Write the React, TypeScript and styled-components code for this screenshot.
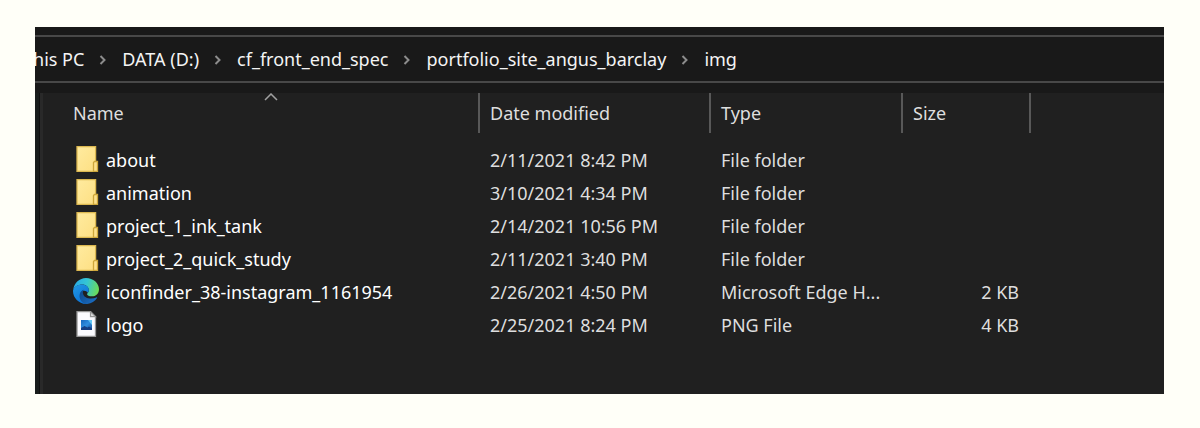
import React from "react";
import styled, { createGlobalStyle } from "styled-components";

const GlobalStyle = createGlobalStyle`
  *, *::before, *::after { box-sizing: border-box; }
  body {
    margin: 0;
    background: #fffff8;
    font-family: "Noto Sans", "Open Sans", sans-serif;
    font-size: 18px;
    line-height: 24px;
  }
`;

const Page = styled.main`
  padding: 27px 36px 34px 35px;
`;

const Explorer = styled.section`
  background: #191919;
  overflow: hidden;
`;

const AddressBar = styled.nav`
  margin-top: 8px;
  border-top: 2px solid #484848;
  border-bottom: 2px solid #484848;
  overflow: hidden;
`;

const Crumbs = styled.ol`
  display: flex;
  align-items: center;
  height: 44px;
  margin: 0 0 0 -12px;
  padding: 0;
  list-style: none;
`;

const Crumb = styled.li`
  display: flex;
  align-items: center;
  white-space: nowrap;
`;

const CrumbLink = styled.a`
  color: #f4f4f4;
  text-decoration: none;
`;

const ChevronIcon = styled.svg`
  flex: none;
  width: 8px;
  height: 12px;
  margin: 2px 15px 0;
`;

const Body = styled.div`
  display: flex;
  margin-top: 10px;
`;

const PaneEdge = styled.div`
  flex: none;
  width: 8px;
  border-right: 3px solid #292929;
  background: linear-gradient(to right, #191d1c 4px, #111111 4px);
`;

const ListPane = styled.div`
  flex: 1;
  min-width: 0;
  padding-bottom: 53px;
  background: #202020;
`;

const FileTable = styled.table`
  width: 100%;
  table-layout: fixed;
  border-collapse: separate;
  border-spacing: 0;
`;

const Column = styled.col<{ $width?: number }>`
  width: ${({ $width }) => ($width ? `${$width}px` : "auto")};
`;

const HeadCell = styled.th`
  position: relative;
  height: 40px;
  padding: 0;
  border-right: 2px solid #585858;
  &:last-child { border-right: 0; }
`;

const SortButton = styled.button<{ $indent: number }>`
  display: block;
  width: 100%;
  height: 40px;
  padding: 0 0 0 ${({ $indent }) => $indent}px;
  border: 0;
  background: none;
  color: #dedede;
  font: inherit;
  font-weight: 400;
  text-align: left;
`;

const SortMark = styled.svg`
  position: absolute;
  top: 0;
  left: 50%;
  width: 14px;
  height: 8px;
  margin-left: 3px;
`;

const Rows = styled.tbody`
  &::before {
    content: "";
    display: table-row;
    height: 10px;
  }
`;

const Cell = styled.td<{ $align?: "left" | "right" }>`
  height: 33px;
  padding: 0 12px 0 10px;
  color: #dedede;
  text-align: ${({ $align }) => $align ?? "left"};
  white-space: nowrap;
  overflow: hidden;
  text-overflow: ellipsis;
`;

const NameCell = styled(Cell)`
  padding-left: 30px;
  color: #ffffff;
`;

const FileName = styled.span`
  display: flex;
  align-items: center;
  gap: 7px;
`;

const FileIcon = styled.svg`
  flex: none;
  width: 26px;
  height: 26px;
  margin-bottom: 2px;
`;

function Chevron() {
  return (
    <ChevronIcon viewBox="0 0 8 12" aria-hidden="true">
      <path d="M1.5 2 5.500 6 1.5 10" fill="none" stroke="#8c8c8c" strokeWidth="2" />
    </ChevronIcon>
  );
}

function FolderIcon() {
  return (
    <FileIcon viewBox="0 0 26 26" aria-hidden="true">
      <defs>
        <linearGradient id="folder" x1="0" y1="0" x2="1" y2="1">
          <stop offset="0" stopColor="#ffeb9f" />
          <stop offset="1" stopColor="#fddf83" />
        </linearGradient>
      </defs>
      <path d="M4 .7h18.600v24.600H4z" fill="url(#folder)" stroke="#dcb850" strokeWidth="1.300" />
      <path d="M20.500 25.300V16.500l1-1h3v9.800z" fill="#fde08a" stroke="#cda63a" strokeWidth="1.300" />
    </FileIcon>
  );
}

function EdgeIcon() {
  return (
    <FileIcon viewBox="0 0 24 24" aria-hidden="true">
      <defs>
        <linearGradient id="edgeTop" x1="0" y1="0.3" x2="1" y2="0.5">
          <stop offset="0" stopColor="#28a9e8" />
          <stop offset="0.5" stopColor="#35c6d3" />
          <stop offset="1" stopColor="#6bdc57" />
        </linearGradient>
        <linearGradient id="edgeLeft" x1="0" y1="0" x2="0.6" y2="1">
          <stop offset="0" stopColor="#2299e4" />
          <stop offset="1" stopColor="#0b72d6" />
        </linearGradient>
        <linearGradient id="edgeBottom" x1="0" y1="0" x2="1" y2="0.7">
          <stop offset="0" stopColor="#0d4687" />
          <stop offset="1" stopColor="#1a6cc0" />
        </linearGradient>
      </defs>
      <path d="M.3 10.500C1 4.600 6 0 12 0c6.700 0 12 4.800 12 10.300 0 4-3 6.600-6.500 6.600-2.700 0-4.500-.9-4.500-2 0-.8 1.600-1.400 1.600-3.700 0-2.900-2.600-5.200-6-5.200C4.500 6 1.500 8 .3 10.500z" fill="url(#edgeTop)" />
      <path d="M.2 10.800C1.300 8 4.400 6 8.300 6c3.500 0 6.300 2.300 6.300 5 0 1.200-.5 2-1 2.700-.7-1.200-1.800-2-3.200-2-2.400 0-3.900 2.200-3.900 4.800 0 3.400 2.600 6.500 6.500 7.500-7 .3-13-5.200-13-12 0-.4.1-.8.2-1.200z" fill="url(#edgeLeft)" />
      <path d="M10.300 10.500c-3 1-4.300 3.300-4.300 6 0 4 3.300 7.500 7.200 7.500 3.900-.4 7-2.400 9-5.500.3-.5-.1-.8-.6-.6-4.500 2-11.300 1.400-12.400-3.600-.3-1.500.1-2.800 1.100-3.800z" fill="url(#edgeBottom)" />
    </FileIcon>
  );
}

function ImageIcon() {
  return (
    <FileIcon viewBox="0 0 26 26" aria-hidden="true">
      <defs>
        <linearGradient id="photo" x1="0" y1="0" x2="1" y2="1">
          <stop offset="0" stopColor="#1767bd" />
          <stop offset="0.5" stopColor="#318fe0" />
          <stop offset="1" stopColor="#164b96" />
        </linearGradient>
      </defs>
      <path d="M4 .7h13.500l5 5v19.600H4z" fill="#fbfbff" stroke="#969696" strokeWidth="1.300" />
      <path d="M17.500.7v5h5z" fill="#dedede" stroke="#969696" strokeWidth="1.200" />
      <path d="M8 9h11v10H8z" fill="url(#photo)" />
      <path d="M15 9h4v5z" fill="#62c8f5" />
      <path d="M8 19v-2l3.500-2 3 1.500L16 15.500l3 2V19z" fill="#173f83" />
    </FileIcon>
  );
}

const icons = { folder: FolderIcon, edge: EdgeIcon, image: ImageIcon };

type Entry = {
  name: string;
  modified: string;
  type: string;
  size?: string;
  icon: keyof typeof icons;
};

const path = ["This PC", "DATA (D:)", "cf_front_end_spec", "portfolio_site_angus_barclay", "img"];

const headings = ["Name", "Date modified", "Type", "Size"];

const entries: Entry[] = [
  { name: "about", modified: "2/11/2021 8:42 PM", type: "File folder", icon: "folder" },
  { name: "animation", modified: "3/10/2021 4:34 PM", type: "File folder", icon: "folder" },
  { name: "project_1_ink_tank", modified: "2/14/2021 10:56 PM", type: "File folder", icon: "folder" },
  { name: "project_2_quick_study", modified: "2/11/2021 3:40 PM", type: "File folder", icon: "folder" },
  { name: "iconfinder_38-instagram_1161954", modified: "2/26/2021 4:50 PM", type: "Microsoft Edge H...", size: "2 KB", icon: "edge" },
  { name: "logo", modified: "2/25/2021 8:24 PM", type: "PNG File", size: "4 KB", icon: "image" },
];

export default function App() {
  return (
    <Page>
      <GlobalStyle />
      <Explorer>
        <AddressBar>
          <Crumbs>
            {path.map((part, i) => (
              <Crumb key={part}>
                {i > 0 && <Chevron />}
                <CrumbLink href="#">{part}</CrumbLink>
              </Crumb>
            ))}
          </Crumbs>
        </AddressBar>
        <Body>
          <PaneEdge />
          <ListPane>
            <FileTable>
              <colgroup>
                <Column $width={437} />
                <Column $width={231} />
                <Column $width={192} />
                <Column $width={128} />
                <Column />
              </colgroup>
              <thead>
                <tr>
                  {headings.map((heading, i) => (
                    <HeadCell key={heading} scope="col" aria-sort={i === 0 ? "ascending" : undefined}>
                      <SortButton type="button" $indent={i === 0 ? 30 : 10}>{heading}</SortButton>
                      {i === 0 && (
                        <SortMark viewBox="0 0 14 8" aria-hidden="true">
                          <path d="M1 7 7 1l6 6" fill="none" stroke="#a0a0a0" strokeWidth="1.500" />
                        </SortMark>
                      )}
                    </HeadCell>
                  ))}
                  <HeadCell as="td" />
                </tr>
              </thead>
              <Rows>
                {entries.map((entry) => {
                  const Icon = icons[entry.icon];
                  return (
                    <tr key={entry.name}>
                      <NameCell>
                        <FileName>
                          <Icon />
                          {entry.name}
                        </FileName>
                      </NameCell>
                      <Cell>{entry.modified}</Cell>
                      <Cell>{entry.type}</Cell>
                      <Cell $align="right">{entry.size}</Cell>
                      <Cell />
                    </tr>
                  );
                })}
              </Rows>
            </FileTable>
          </ListPane>
        </Body>
      </Explorer>
    </Page>
  );
}
